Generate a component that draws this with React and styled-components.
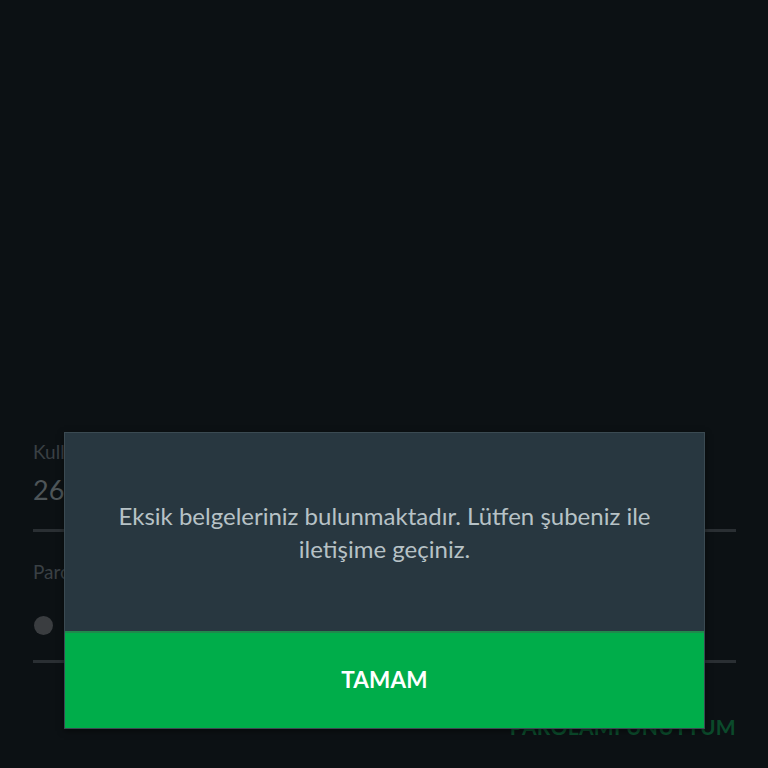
import React from "react";
import styled, { createGlobalStyle } from "styled-components";

const Global = createGlobalStyle`
  html, body { margin: 0; padding: 0; background: #0c1114; }
  body { font-family: Lato, "Noto Sans", sans-serif; }
  * { box-sizing: border-box; }
`;

const Page = styled.div`
  position: relative;
  width: 768px;
  height: 768px;
  overflow: hidden;
  background: #0c1114;
`;

const Form = styled.div`
  display: flex;
  flex-direction: column;
  padding: 438px 32px 0 33px;
`;

const Label = styled.div`
  font-size: 19px;
  color: #3a4044;
  line-height: 28px;
  margin-top: ${(p) => p.$mt || 0}px;
`;

const Value = styled.div`
  font-size: 27px;
  color: #4e5558;
  line-height: 36px;
  margin-top: 6px;
`;

const Divider = styled.div`
  height: 3px;
  background: #2a2f33;
  margin-top: ${(p) => p.$mt}px;
`;

const Dot = styled.div`
  width: 19px;
  height: 19px;
  border-radius: 50%;
  background: #3a3d40;
  margin: 30px 0 0 1px;
`;

const ForgotRow = styled.div`
  display: flex;
  justify-content: flex-end;
  margin-top: 51px;
`;

const Forgot = styled.div`
  font-size: 21px;
  font-weight: 700;
  color: #0b4a2b;
  letter-spacing: 0.3px;
`;

const Dialog = styled.div`
  position: absolute;
  left: 64px;
  top: 432px;
  width: 641px;
  height: 297px;
  display: flex;
  flex-direction: column;
  border: 1px solid #3b4a52;
  box-shadow: 0 2px 6px rgba(0, 0, 0, 0.5);
`;

const Body = styled.div`
  flex: 0 0 198px;
  background: #283740;
  display: flex;
  align-items: center;
  justify-content: center;
  padding: 0 30px;
`;

const Message = styled.p`
  margin: 0;
  text-align: center;
  color: #b7c2c6;
  font-size: 24px;
  line-height: 33px;
`;

const Button = styled.button`
  flex: 1;
  border: none;
  border-top: 2px solid #1f8a4c;
  background: #00ad4a;
  color: #ffffff;
  font-family: Lato, "Noto Sans", sans-serif;
  font-weight: 700;
  font-size: 22.5px;
  letter-spacing: 0.2px;
  padding: 0 0 2px;
  cursor: pointer;
`;

export default function App() {
  return (
    <>
      <Global />
      <Page>
        <Form>
          <Label>Kullanıcı Adı</Label>
          <Value>26</Value>
          <Divider $mt={21} />
          <Label $mt={26}>Parola</Label>
          <Dot />
          <Divider $mt={25} />
          <ForgotRow>
            <Forgot>PAROLAMI UNUTTUM</Forgot>
          </ForgotRow>
        </Form>
        <Dialog>
          <Body>
            <Message>
              Eksik belgeleriniz bulunmaktadır. Lütfen şubeniz ile
              <br />
              iletişime geçiniz.
            </Message>
          </Body>
          <Button>TAMAM</Button>
        </Dialog>
      </Page>
    </>
  );
}
